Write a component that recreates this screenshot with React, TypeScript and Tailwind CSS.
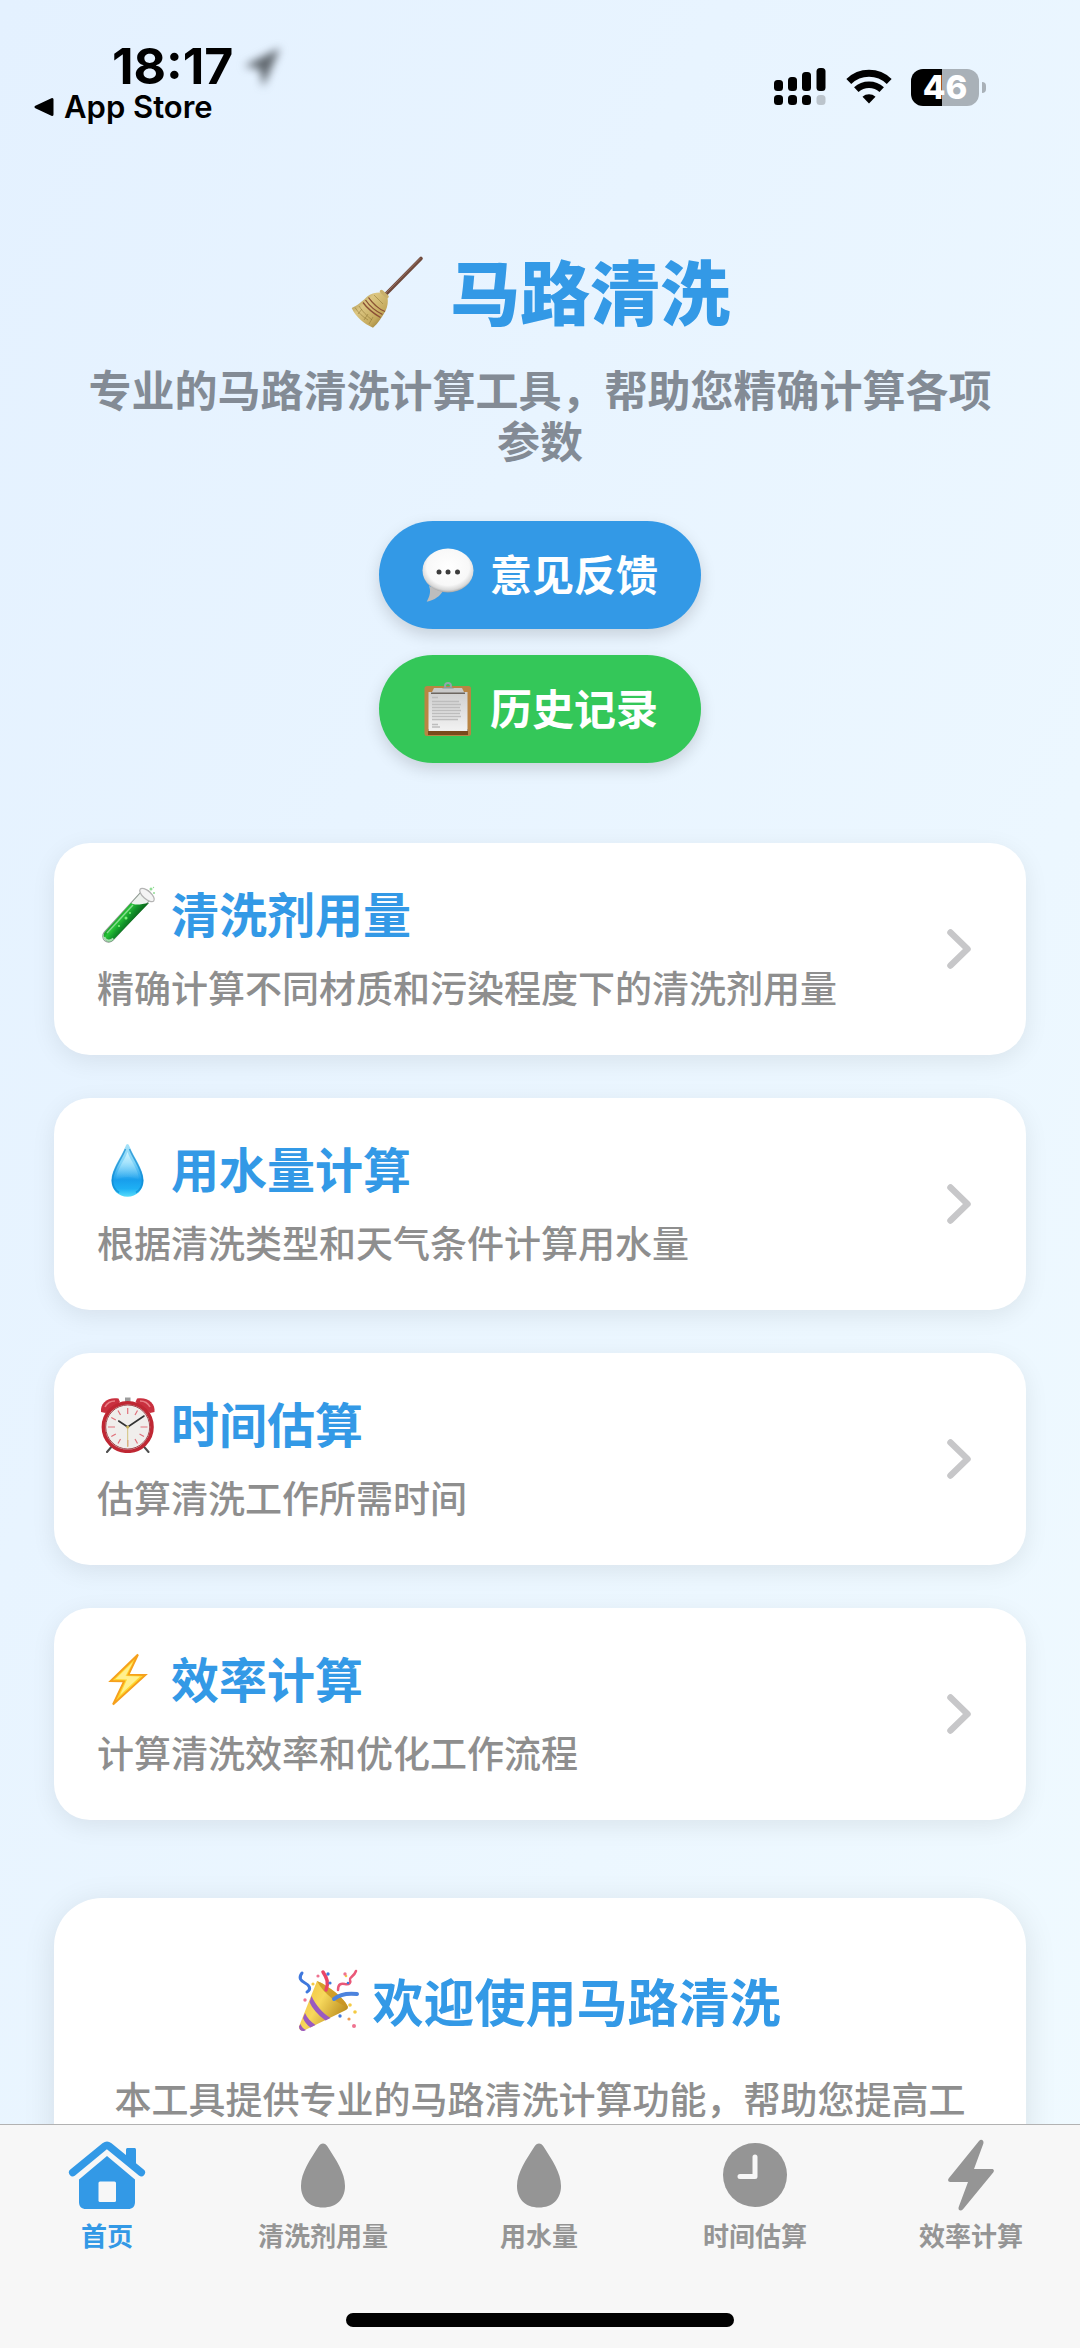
import type { ReactNode } from "react";

function BroomIcon() {
    return (
        <svg className="h-[72px] w-[72px] shrink-0 overflow-visible" viewBox="0 0 72 72" aria-hidden="true">
            <defs>
                <linearGradient id="straw" x1="0" y1="0" x2="1" y2="1">
                    <stop offset="0" stopColor="#8f7a3c" />
                    <stop offset="0.35" stopColor="#dcc682" />
                    <stop offset="0.7" stopColor="#c4a95c" />
                    <stop offset="1" stopColor="#7d6426" />
                </linearGradient>
            </defs>
            <path d="M71 2.500 36 38" stroke="#6f4a3c" strokeWidth="3.600" strokeLinecap="round" />
            <path d="M70 2.500 36 37" stroke="#9a7363" strokeWidth="1" strokeLinecap="round" />
            <path d="M32 36.500 37.500 41.500c.8 4 .2 9-2 13.500-3.500 6-7 12-12.500 16.700C14 68 5 60 1.700 52c5-2 11-7 15.500-11.500C21 37 27 36 32 36.500Z" fill="url(#straw)" />
            <path d="M5 51.500c3 5 8 9.500 13 12.500M9 50c3 5 8 10 13 14M8 58l4-5M14 64l4-6M19 68l4-7M19 42l10 10M24 39l9 9" stroke="#8d7535" strokeWidth=".9" fill="none" opacity=".6" />
            <path d="M18.500 41.500c4 6 9 11 16.500 14M15.500 44c4 6 9 10.500 17 14.500M13 46.500c4 5.500 9 10 17.500 15" stroke="#8b4f35" strokeWidth="1.300" fill="none" />
            <path d="m31.500 35.500 5.500 5" stroke="#c9b06a" strokeWidth="3.500" strokeLinecap="round" />
        </svg>
    );
}

function BubbleIcon() {
    return (
        <svg className="h-[54px] w-[54px] shrink-0" viewBox="0 0 54 54" aria-hidden="true">
            <defs>
                <radialGradient id="bubble" cx=".5" cy=".42" r=".58">
                    <stop offset="0" stopColor="#ffffff" />
                    <stop offset="0.72" stopColor="#f8f8f8" />
                    <stop offset="0.9" stopColor="#d9d9d9" />
                    <stop offset="1" stopColor="#a3a3a3" />
                </radialGradient>
            </defs>
            <path d="M7 38c2 5 1 10-2.300 15.700C13 52 18 48 21 43Z" fill="#bdbdbd" />
            <ellipse cx="26" cy="22.500" rx="25.500" ry="22" fill="url(#bubble)" />
            <circle cx="17" cy="24" r="2.500" fill="#3c3c3c" />
            <circle cx="26" cy="24" r="2.500" fill="#3c3c3c" />
            <circle cx="35.500" cy="24" r="2.500" fill="#3c3c3c" />
        </svg>
    );
}

function ClipboardIcon() {
    return (
        <svg className="h-[54px] w-[54px] shrink-0" viewBox="0 0 54 54" aria-hidden="true">
            <defs>
                <linearGradient id="sheet" x1="0" y1="0" x2="0" y2="1">
                    <stop offset="0" stopColor="#cfcfcf" />
                    <stop offset="1" stopColor="#f2f2f2" />
                </linearGradient>
            </defs>
            <rect x="2.500" y="4" width="46.500" height="50" rx="2.500" fill="#b98543" />
            <path d="M6 47h40v6H6z" fill="#7a4a1c" />
            <path d="M6.500 10h39v39h-39z" fill="url(#sheet)" />
            <path d="M10 15.500h6M10 19.500h27M10 22.500h29M10 25.500h28M10 28.500h29M10 31.500h28M10 34.500h29M10 37.500h26M10 42.500h6M10 45h8" stroke="#bdbdbd" strokeWidth="1.600" />
            <circle cx="26" cy="4" r="3" fill="none" stroke="#93a5aa" strokeWidth="2" />
            <path d="M12 6h28l2.500 5H9.500Z" fill="#c9c9c9" />
            <path d="M9 11.300h34" stroke="#6d6660" strokeWidth="1.500" />
            <path d="M20 6.500c2-2 10-2 12 0Z" fill="#8b9a9d" />
        </svg>
    );
}

function TestTubeIcon() {
    return (
        <svg className="h-[62px] w-[62px] shrink-0 overflow-visible" viewBox="0 0 62 62" aria-hidden="true">
            <defs>
                <linearGradient id="tube" x1="15" y1="36" x2="30" y2="48" gradientUnits="userSpaceOnUse">
                    <stop offset="0" stopColor="#0a7a1c" />
                    <stop offset="0.4" stopColor="#27c436" />
                    <stop offset="0.7" stopColor="#12932a" />
                    <stop offset="1" stopColor="#0b6a1c" />
                </linearGradient>
            </defs>
            <path d="M11.700 55.200 48.500 15" stroke="#8f9a92" strokeWidth="13" strokeLinecap="round" />
            <path d="M11.700 55.200 48.500 15" stroke="#eef2ee" strokeWidth="11" strokeLinecap="round" />
            <path d="M7.500 51.500 34 22c5 3 10 1 18 0L16 59.300c-5 4-12-2-8.500-7.800Z" fill="url(#tube)" />
            <path d="m10 52 26-28" stroke="#ffffff" strokeWidth="1.400" opacity=".45" />
            <path d="M7.300 56c1.500 4 6 4.500 9 1.500" stroke="#a5dcae" strokeWidth="2" fill="none" />
            <circle cx="29" cy="37" r="1.500" fill="#7df07c" />
            <circle cx="33" cy="32" r="1" fill="#7df07c" />
            <circle cx="22" cy="45" r="1.100" fill="#7df07c" />
            <ellipse cx="50" cy="14" rx="9" ry="4" transform="rotate(41 50 14)" fill="#f4f4f4" stroke="#b4b4b4" strokeWidth="1.300" />
            <circle cx="54" cy="8" r="1.500" fill="#91dd95" />
            <circle cx="57" cy="12" r="1" fill="#91dd95" />
            <circle cx="56.500" cy="6.500" r=".7" fill="#91dd95" />
        </svg>
    );
}

function WaterDropIcon() {
    return (
        <svg className="h-[62px] w-[62px] shrink-0" viewBox="0 0 62 62" aria-hidden="true">
            <defs>
                <linearGradient id="water" x1="0" y1="0" x2="0" y2="1">
                    <stop offset="0" stopColor="#a8e2f8" />
                    <stop offset="0.35" stopColor="#7fd4f8" />
                    <stop offset="0.68" stopColor="#189eec" />
                    <stop offset="0.85" stopColor="#1eb0f4" />
                    <stop offset="1" stopColor="#58dcfa" />
                </linearGradient>
                <linearGradient id="gloss" x1="0" y1="0" x2="0" y2="1">
                    <stop offset="0" stopColor="#d9f6ff" stopOpacity=".9" />
                    <stop offset="1" stopColor="#9fe2ff" stopOpacity="0" />
                </linearGradient>
            </defs>
            <path d="M30.500 8c.8 0 1.300.8 1.700 1.800C37 22 46.500 33 46.500 44.500c0 9.500-7 16.200-16 16.200s-16-6.700-16-16.200C14.500 33 24 22 28.800 9.800c.4-1 .9-1.800 1.700-1.800Z" fill="url(#water)" />
            <path d="M28.500 13C24 24 15.500 34 15.500 44.500c0 5 2.500 9.500 6.500 12" stroke="#1389cf" strokeWidth="1.600" fill="none" opacity=".7" />
            <path d="M32.500 13C37 24 45.500 34 45.500 44.500c0 5-2.500 9.500-6.500 12" stroke="#1389cf" strokeWidth="1.600" fill="none" opacity=".7" />
            <path d="M30.500 16C27 26 19 34 19 44c7-4 16-4 23 0 0-10-8-18-11.500-28Z" fill="url(#gloss)" />
        </svg>
    );
}

function AlarmIcon() {
    return (
        <svg className="h-[62px] w-[62px] shrink-0" viewBox="0 0 62 62" aria-hidden="true">
            <path d="m16 54-6 7M45.500 54l6 7" stroke="#4d4d4d" strokeWidth="2" strokeLinecap="round" />
            <path d="M28 6.500h5.500v5H28z" fill="#9c9c9c" />
            <path d="M4 21C3 12 11 5.500 21.500 7.500L23 11 8.500 22Z" fill="#c9303f" />
            <path d="M57.500 21C58.500 12 50.500 5.500 40 7.500L38.500 11 53 22Z" fill="#c9303f" />
            <path d="M8 16c2-4 6-6 10-6M53 16c-2-4-6-6-10-6" stroke="#e97d84" strokeWidth="1.600" fill="none" />
            <circle cx="30.700" cy="36" r="24.300" fill="#f0eeec" stroke="#bf2733" strokeWidth="3.600" />
            <circle cx="30.700" cy="36" r="22" fill="none" stroke="#8e1c25" strokeWidth=".8" />
            <path d="M30.700 17v6M30.700 49v6.500M11 36h7M43.500 36h7M21 19.500l2.500 4.500M40.500 19.500 38 24M14.300 26.500l4.500 2.500M14.300 45.500l4.500-2.500M47 45.500 42.500 43M21 52.500l2.500-4.500M40.500 52.500 38 48" stroke="#e0707a" strokeWidth="1.200" />
            <path d="M30.700 36v20" stroke="#d3c27a" strokeWidth="1" />
            <path d="m30.700 36-9-6M30.700 36 47 25" stroke="#333333" strokeWidth="1.600" strokeLinecap="round" />
            <circle cx="30.700" cy="36" r="1.600" fill="#c9b35e" />
        </svg>
    );
}

function ZapIcon() {
    return (
        <svg className="h-[62px] w-[62px] shrink-0" viewBox="0 0 62 62" aria-hidden="true">
            <path d="M41 8.500 13.500 35l13.500.300L16 58.500 48.500 29 31.500 28.700Z" fill="#ffd92e" stroke="#f6a01c" strokeWidth="1.900" strokeLinejoin="miter" />
            <path d="M36 16 18.500 33l11.500.500L23 49l20-18.500-14.500-.500Z" fill="#fff3a0" opacity=".85" />
        </svg>
    );
}

function PartyIcon() {
    return (
        <svg className="h-[62px] w-[60px] shrink-0 overflow-visible" viewBox="0 0 60 62" aria-hidden="true">
            <defs>
                <linearGradient id="cone" x1="0" y1="0" x2="1" y2=".6">
                    <stop offset="0" stopColor="#f0bd36" />
                    <stop offset="0.5" stopColor="#f7d85c" />
                    <stop offset="1" stopColor="#b98a1c" />
                </linearGradient>
            </defs>
            <path d="M18 12C26 15 44 27 49 38c0 2-2 3-4 4L5 61.500c-3 .5-5.500-1-5-4Z" fill="url(#cone)" />
            <path d="M12.500 27c4 9 11 17 19 22l-5 2.500C19 46 13 39 10.500 33ZM6 44c2 5 6 9 10.500 12l-5 2.500C8 56 5 52 4 49ZM1.500 55c1 3 3 5 5.500 6l-2 1C2 62.500 0 60.500 0 57.500Z" fill="#9a5ac0" />
            <path d="M18 12C26 15 44 27 49 38c-8-2-24-12-31-26Z" fill="#c99321" opacity=".8" />
            <path d="M8 23c5-3 2-7-2-9s-7-5-3-10" stroke="#3f78dd" strokeWidth="3" fill="none" strokeLinecap="round" />
            <path d="M27 21c3-7 1-12-3-18" stroke="#ea4567" strokeWidth="3.500" fill="none" strokeLinecap="round" />
            <path d="M39 21c0-6 3-7 7-6 5 1 6-2 5-4-1-3 4-3 6-9" stroke="#ea5878" strokeWidth="2.500" fill="none" strokeLinecap="round" />
            <path d="M35 30c6-5 14-6 23-5" stroke="#4c83dd" strokeWidth="4" fill="none" strokeLinecap="round" />
            <g fill="#3f78dd">
                <circle cx="29" cy="5" r="1.700" />
                <circle cx="31" cy="14" r="1.600" />
                <circle cx="41" cy="47" r="1.700" />
                <circle cx="49" cy="14" r="1.300" />
            </g>
            <g fill="#f4ca42">
                <circle cx="14" cy="15" r="1.600" />
                <circle cx="51" cy="36" r="1.800" />
                <circle cx="56" cy="43" r="1.800" />
                <circle cx="47" cy="7" r="1.300" />
            </g>
            <g fill="#ef7390">
                <circle cx="46" cy="5" r="1.700" />
                <circle cx="55" cy="57" r="2" />
                <circle cx="6" cy="31" r="1.700" />
                <circle cx="19" cy="7" r="1.600" />
            </g>
            <circle cx="50" cy="50" r="1.600" fill="#ee9b54" />
        </svg>
    );
}

function HomeTabIcon() {
    return (
        <svg className="h-[72px] w-[78px]" viewBox="0 0 78 72" fill="currentColor" aria-hidden="true">
            <path d="M60 9h6c1.500 0 2 .6 2 2v19L58 21V11c0-1.400.5-2 2-2Z" />
            <path d="M4.700 33.500 36.800 7.200c1.400-1.100 3-1.100 4.400 0l32.100 26.300" stroke="currentColor" strokeWidth="7.500" strokeLinecap="round" strokeLinejoin="round" fill="none" />
            <path d="M39 17 11 40.500V63c0 4.500 2.500 7 7 7h42c4.500 0 7-2.500 7-7V40.500Z" />
            <rect x="30.500" y="42.500" width="17.500" height="20.500" rx="1.500" fill="#f7f7f7" />
        </svg>
    );
}

function DropTabIcon() {
    return (
        <svg className="h-[72px] w-[46px]" viewBox="0 0 46 72" fill="currentColor" aria-hidden="true">
            <path d="M23 4.500c1.800 0 3.300 1 4.500 3C36 21 45 33.500 45 47c0 13-8.500 21.500-22 21.500S1 60 1 47C1 33.500 10 21 18.500 7.500c1.200-2 2.700-3 4.500-3Z" />
        </svg>
    );
}

function ClockTabIcon() {
    return (
        <svg className="h-[72px] w-[64px]" viewBox="0 0 64 72" aria-hidden="true">
            <circle cx="32" cy="36" r="32" fill="currentColor" />
            <path d="M32 18v19.500H17" stroke="#f7f7f7" strokeWidth="5" strokeLinecap="round" strokeLinejoin="round" fill="none" />
        </svg>
    );
}

function BoltTabIcon() {
    return (
        <svg className="h-[72px] w-[46px]" viewBox="0 0 46 72" fill="currentColor" aria-hidden="true">
            <path d="M31 2 .8 39.200c-1.400 1.900-.6 3.800 1.500 3.800H20L10.700 68c-1 3.500 2.100 4.600 4.300 2.300L45.200 33.500c1.400-1.900.6-3.500-1.500-3.500H26L35.300 4.800C36.300 1.300 33.200-.5 31 2Z" />
        </svg>
    );
}

function StatusIcons() {
    return (
        <div className="flex items-center gap-[19px]">
            <svg className="h-[38px] w-[54px]" viewBox="0 0 54 38" aria-label="Signal" role="img">
                <rect x="1" y="12" width="9" height="11" rx="3.500" />
                <rect x="15" y="9" width="9" height="14" rx="3.500" />
                <rect x="29" y="4" width="9" height="19" rx="3.500" />
                <rect x="43.500" y="0" width="9" height="23" rx="3.500" />
                <rect x="1" y="27" width="9" height="10" rx="3.500" />
                <rect x="15" y="27" width="9" height="10" rx="3.500" />
                <rect x="29" y="27" width="9" height="10" rx="3.500" />
                <rect x="43.500" y="27" width="9" height="10" rx="3.500" fill="#bbc4cc" />
            </svg>
            <svg className="h-[38px] w-[46px]" viewBox="0 0 46 38" fill="none" stroke="black" aria-label="Wi-Fi" role="img">
                <path d="M2.800 13.500a29 29 0 0 1 40.400 0" strokeWidth="7" />
                <path d="M10.300 21.700a18.500 18.500 0 0 1 25.400 0" strokeWidth="6.500" />
                <path d="m23 35.500-6.500-6.700c3.600-3.300 9.400-3.300 13 0Z" fill="black" stroke="none" />
            </svg>
            <div className="flex items-center gap-[3px]">
                <div className="flex h-[37px] w-[68px] items-center justify-center rounded-[12px] bg-linear-to-r from-black from-46% to-[#a9b1b8] to-46% text-[33px] leading-[37px] font-extrabold text-white">
                    46
                </div>
                <div className="h-[11px] w-[4px] rounded-r-full bg-[#a9b1b8]" />
            </div>
        </div>
    );
}

function StatusBar() {
    return (
        <header className="flex items-start justify-between pt-[42px] pr-[94px] pl-[34px] font-[Inter,sans-serif] text-black">
            <div>
                <div className="flex items-center gap-[10px] pl-[78px]">
                    <span className="text-[50px] leading-[48px] font-bold">18:17</span>
                    <svg className="h-[44px] w-[40px] overflow-visible blur-[4px]" viewBox="0 0 40 44" aria-hidden="true">
                        <path d="M37 4 1 22l16 3 3 18Z" fill="#5f666d" />
                    </svg>
                </div>
                <a href="#app-store" className="flex items-center gap-[9px] text-[31px] leading-[34px] font-semibold">
                    <svg className="h-[20px] w-[21px]" viewBox="0 0 21 20" aria-hidden="true">
                        <path d="M2 10 18 2.500v15Z" stroke="black" strokeWidth="3" strokeLinejoin="round" />
                    </svg>
                    App Store
                </a>
            </div>
            <div className="pt-[26px]">
                <StatusIcons />
            </div>
        </header>
    );
}

const features = [
    { id: "detergent", icon: <TestTubeIcon />, title: "清洗剂用量", text: "精确计算不同材质和污染程度下的清洗剂用量" },
    { id: "water", icon: <WaterDropIcon />, title: "用水量计算", text: "根据清洗类型和天气条件计算用水量" },
    { id: "time", icon: <AlarmIcon />, title: "时间估算", text: "估算清洗工作所需时间" },
    { id: "efficiency", icon: <ZapIcon />, title: "效率计算", text: "计算清洗效率和优化工作流程" },
];

const tabs = [
    { id: "home", icon: <HomeTabIcon />, label: "首页" },
    { id: "detergent", icon: <DropTabIcon />, label: "清洗剂用量" },
    { id: "water", icon: <DropTabIcon />, label: "用水量" },
    { id: "time", icon: <ClockTabIcon />, label: "时间估算" },
    { id: "efficiency", icon: <BoltTabIcon />, label: "效率计算" },
];

function FeatureCard({ id, icon, title, text }: { id: string; icon: ReactNode; title: string; text: string }) {
    return (
        <a
            href={`#${id}`}
            className="flex items-center justify-between rounded-[36px] bg-white pt-[38px] pr-[54px] pb-[44px] pl-[43px] shadow-[0_6px_24px_rgba(0,0,0,0.08)]"
        >
            <div>
                <h2 className="flex items-center gap-3 text-[48px] leading-[62px] font-bold text-[#3399e6]">
                    {icon}
                    {title}
                </h2>
                <p className="mt-5 text-[37px] leading-[48px] font-medium text-[#8e8e8e]">{text}</p>
            </div>
            <svg className="mt-[6px] h-[42px] w-[26px] shrink-0" viewBox="0 0 26 42" fill="none" aria-hidden="true">
                <path d="M4.500 4.500 21.500 21l-17 16.500" stroke="#c7c7c9" strokeWidth="6.500" strokeLinecap="round" strokeLinejoin="round" />
            </svg>
        </a>
    );
}

export default function App() {
    return (
        <div className="flex h-screen flex-col overflow-hidden bg-linear-to-br from-[#e4f1ff] to-[#f0faff] font-['Noto_Sans_CJK_SC',sans-serif]">
            <StatusBar />

            <main className="min-h-0 flex-1 overflow-hidden px-[54px] pt-32">
                <section className="flex flex-col items-center">
                    <div className="flex items-end gap-7">
                        <BroomIcon />
                        <h1 className="text-[70px] leading-[76px] font-black text-[#3399e6]">马路清洗</h1>
                    </div>
                    <p className="mt-[35px] px-[34px] text-center text-[43px] leading-[51px] font-bold text-[#838b95]">
                        专业的马路清洗计算工具，帮助您精确计算各项参数
                    </p>
                    <div className="mt-14 flex flex-col gap-[26px] text-[42px] leading-[50px] font-bold text-white">
                        <button className="flex items-center gap-[14px] rounded-full bg-[#3399e6] px-[43px] py-[27px] shadow-[0_6px_16px_rgba(0,0,0,0.15)]">
                            <BubbleIcon />
                            <span className="pb-1">意见反馈</span>
                        </button>
                        <button className="flex items-center gap-[14px] rounded-full bg-[#34c759] px-[43px] py-[27px] shadow-[0_6px_16px_rgba(0,0,0,0.15)]">
                            <ClipboardIcon />
                            <span className="pb-1">历史记录</span>
                        </button>
                    </div>
                </section>

                <section className="mt-20 flex flex-col gap-[43px]">
                    {features.map((feature) => (
                        <FeatureCard key={feature.id} {...feature} />
                    ))}
                </section>

                <section className="mt-[78px] rounded-[48px] bg-white px-[54px] pt-[70px] pb-[70px] shadow-[0_6px_32px_rgba(0,0,0,0.1)]">
                    <h2 className="flex items-center justify-center gap-[13px] text-[51px] leading-[64px] font-bold text-[#3399e6]">
                        <PartyIcon />
                        欢迎使用马路清洗
                    </h2>
                    <p className="mt-[42px] text-center text-[37px] leading-[48px] font-medium text-[#8e8e8e]">
                        本工具提供专业的马路清洗计算功能，帮助您提高工
                    </p>
                </section>
            </main>

            <nav className="border-t border-[#b2b2b2] bg-[#f7f7f7] pt-[14px] pb-[21px]">
                <div className="flex">
                    {tabs.map((tab, index) => (
                        <a
                            key={tab.id}
                            href={`#${tab.id}`}
                            aria-current={index === 0 ? "page" : undefined}
                            className={`flex flex-1 flex-col items-center gap-2 pr-[2px] text-[26px] leading-[32px] font-bold ${index === 0 ? "text-[#3399e6]" : "text-[#959595]"}`}
                        >
                            {tab.icon}
                            {tab.label}
                        </a>
                    ))}
                </div>
                <div className="mx-auto mt-[62px] h-[14px] w-[36%] rounded-full bg-black" />
            </nav>
        </div>
    );
}
